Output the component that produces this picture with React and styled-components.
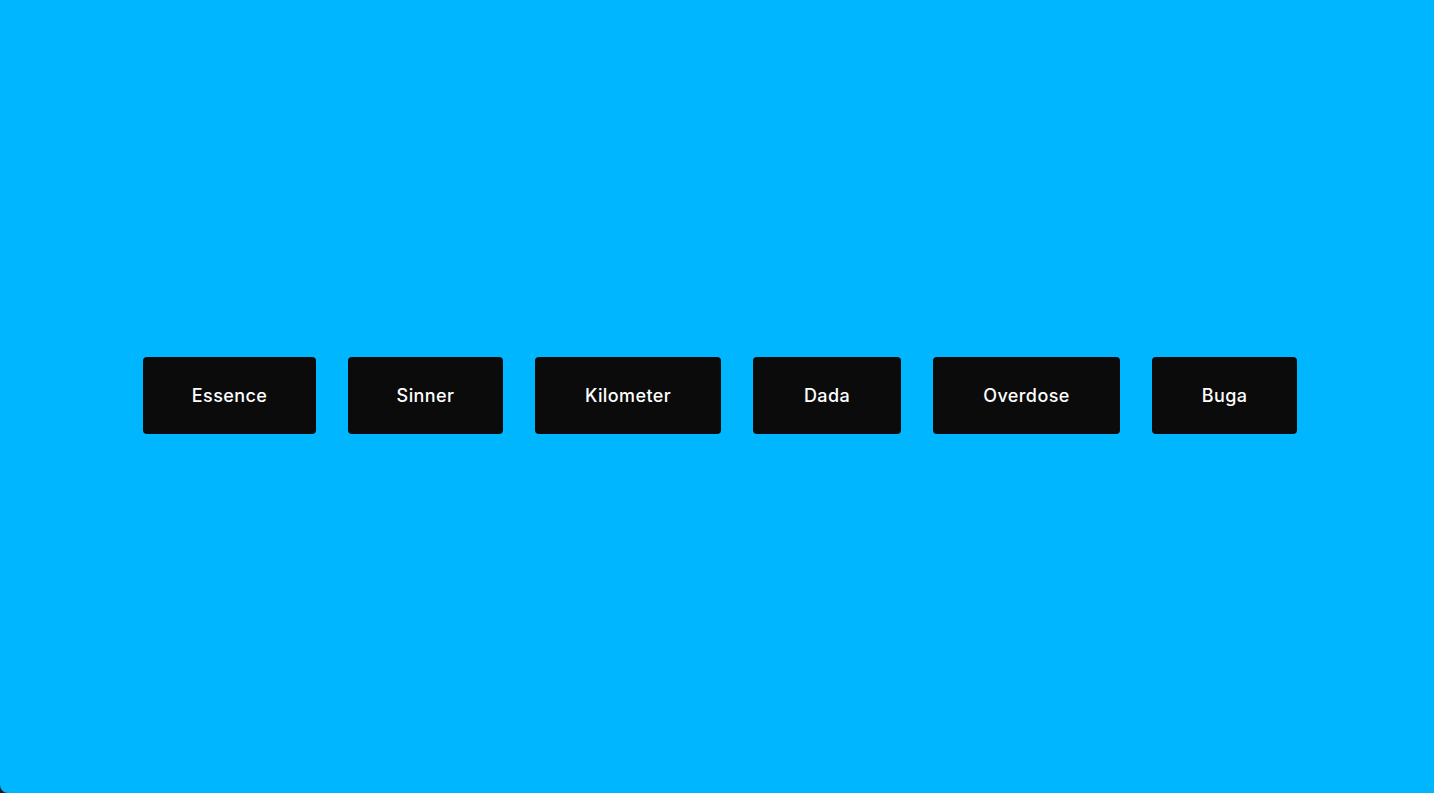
import React from "react";
import styled, { createGlobalStyle } from "styled-components";

const Global = createGlobalStyle`
  html, body { margin: 0; padding: 0; background: #1c1c1c; }
  #root { width: 1434px; height: 793px; }
`;

const Stage = styled.main`
  width: 1434px;
  height: 793px;
  box-sizing: border-box;
  background: #00b7ff;
  border-radius: 0 0 0 8px;
  display: flex;
  align-items: center;
  justify-content: center;
  padding: 0 0 2px 6px;
`;

const Row = styled.nav`
  display: flex;
  gap: 32px;
`;

const Btn = styled.button`
  width: ${(p) => p.$w}px;
  height: 77px;
  border: none;
  border-radius: 4px;
  background: #0b0b0b;
  color: #ffffff;
  font-family: "Inter", "Noto Sans", sans-serif;
  font-weight: 500;
  font-size: 18px;
  letter-spacing: 0.4px;
  display: flex;
  align-items: center;
  justify-content: center;
  padding: 0;
  cursor: pointer;
`;

const items = [
  ["Essence", 173],
  ["Sinner", 155],
  ["Kilometer", 186],
  ["Dada", 148],
  ["Overdose", 187],
  ["Buga", 145],
];

export default function App() {
  return (
    <>
      <Global />
      <Stage>
        <Row>
          {items.map(([label, w]) => (
            <Btn key={label} $w={w}>
              {label}
            </Btn>
          ))}
        </Row>
      </Stage>
    </>
  );
}
